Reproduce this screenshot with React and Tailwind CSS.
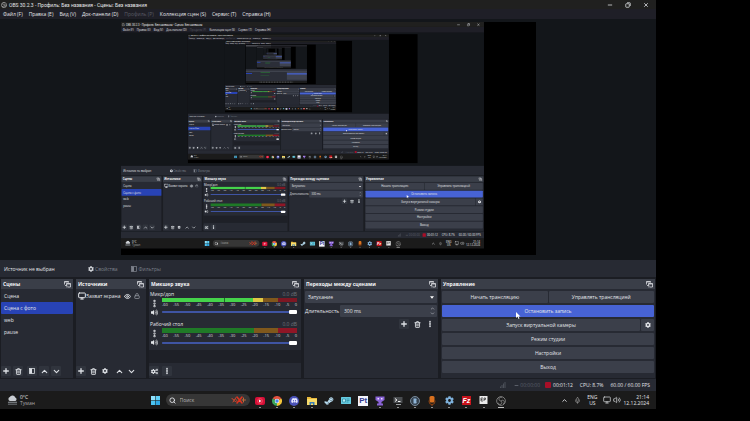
import { useId } from "react";
import clsx from "clsx";
import {
  ChevronDown,
  ChevronUp,
  EllipsisVertical,
  Eye,
  Lock,
  Mic,
  Minus,
  Monitor,
  Plus,
  Search,
  Trash2,
  Volume2,
  X,
} from "lucide-react";
import { FaCog, FaCogs, FaDiscord, FaSteamSymbol, FaVolumeUp } from "react-icons/fa";

// the preview shows the desktop itself, this many levels deep
const MAX_DEPTH = 3;

const MENU = [
  { label: "Файл (F)" },
  { label: "Правка (E)" },
  { label: "Вид (V)" },
  { label: "Док-панели (D)" },
  { label: "Профиль (P)", dim: true },
  { label: "Коллекция сцен (S)" },
  { label: "Сервис (T)" },
  { label: "Справка (H)" },
];

const SCENES = ["Сцена", "Сцена с фото", "web", "pause"];

const CHANNELS = [
  { name: "Микр/доп", live: true },
  { name: "Рабочий стол", live: false },
];

const TICKS = [-60, -55, -50, -45, -40, -35, -30, -25, -20, -15, -10, -5, 0];

// ---------- icons ----------

function ObsIcon({ className }) {
  return (
    <svg viewBox="0 0 24 24" className={className} fill="none" stroke="currentColor" strokeWidth="2">
      <circle cx="12" cy="12" r="10.5" />
      <path d="M12 12a4.5 4.5 0 1 1 3-7.500M12 12a4.500 4.500 0 1 1-7 4M12 12a4.500 4.500 0 1 1 5 7" />
    </svg>
  );
}

function PopOutIcon() {
  return (
    <svg viewBox="0 0 14 14" className="size-[7px]" fill="none" stroke="#e4e6ea" strokeWidth="1.5">
      <path d="M1 7V1h8v2M1 2h8" />
      <path d="M5 5h8v7H8M5 5v3M5 6h8" />
      <path d="M2 9h4v4" />
    </svg>
  );
}

function FilterIcon() {
  return (
    <svg viewBox="0 0 12 12" className="size-[6px]">
      <rect x="1" y="1" width="10" height="10" fill="none" stroke="currentColor" strokeWidth="1.500" />
      <rect x="1" y="1" width="5" height="10" fill="currentColor" />
    </svg>
  );
}

function WeatherIcon() {
  return (
    <svg viewBox="0 0 24 22" className="h-[10px] w-[11px]" fill="#c9cdd2">
      <path d="M6 13a4.500 4.500 0 0 1 0-8.500 6.500 6.500 0 0 1 12 1A4 4 0 0 1 18.500 13z" />
      <path d="M2 15h20v2H2zM2 19h20v2H2z" fill="#8f959b" />
    </svg>
  );
}

function WindowsIcon() {
  return (
    <svg viewBox="0 0 18 18" className="size-[9px]">
      <path d="M0 0h8.500v8.500H0z" fill="#8fe0fb" />
      <path d="M9.500 0H18v8.500H9.500z" fill="#5fd0f7" />
      <path d="M0 9.500h8.500V18H0z" fill="#4cc4f2" />
      <path d="M9.500 9.500H18V18H9.500z" fill="#2fa9e6" />
    </svg>
  );
}

function SearchArt() {
  return (
    <svg viewBox="0 0 32 16" className="h-[8px] w-[16px]" fill="none" strokeWidth="2" strokeLinecap="round">
      <path d="M2 5c4 0 3 6 7 6s3-4 0-5M4 12l6-9" stroke="#c8472f" />
      <path d="M12 2l5 6-5 6M22 2l-5 6 5 6" stroke="#e0331f" strokeWidth="3" />
      <path d="M25 4v8M22 8h7" stroke="#c06a3a" />
    </svg>
  );
}

function YoutubeMusicIcon() {
  return (
    <svg viewBox="0 0 20 20" className="size-[10px]">
      <rect y="2" width="20" height="16" rx="4" fill="#d80f38" />
      <circle cx="10" cy="10" r="5" fill="none" stroke="#f77" strokeWidth="1" />
      <path d="M8 7l5 3-5 3z" fill="#fff" />
    </svg>
  );
}

function ChromeIcon() {
  return (
    <svg viewBox="0 0 20 20" className="size-[10px]">
      <path d="M10 10L1.300 5A10 10 0 0 1 18.700 5z" fill="#e2513f" />
      <path d="M10 10L1.300 5A10 10 0 0 0 10 20z" fill="#3ba55a" />
      <path d="M10 10l8.700-5A10 10 0 0 1 10 20z" fill="#f4c63a" />
      <circle cx="10" cy="10" r="4.500" fill="#fff" />
      <circle cx="10" cy="10" r="3.500" fill="#4a86ee" />
    </svg>
  );
}

function DiscordIcon() {
  return (
    <span className="flex size-[10px] items-center justify-center rounded-full bg-[#4a52b8]">
      <FaDiscord className="size-[7px] text-[#e6e8ff]" />
    </span>
  );
}

function FolderIcon() {
  return (
    <svg viewBox="0 0 20 20" className="size-[10px]">
      <path d="M0 2h7l2 2h11v14H0z" fill="#e9b93b" />
      <path d="M0 6h20v12H0z" fill="#f8dc6b" />
      <path d="M5 18v-6h10v6h-3v-3H8v3z" fill="#3c7fb8" />
    </svg>
  );
}

function CardIcon() {
  return (
    <svg viewBox="0 0 20 18" className="h-[9px] w-[10px]">
      <rect y="2" width="20" height="14" rx="1" fill="#67cbe0" />
      <path d="M3 6h6v6H3zM11 6h6M11 9h6M11 12h4" stroke="#2c8ba1" strokeWidth="1.500" fill="#b9eef8" />
    </svg>
  );
}

function PtIcon() {
  return (
    <span className="flex size-[10px] items-center justify-center bg-[#f3f4fb] font-['Liberation_Sans',sans-serif] text-[8px] leading-[10px] font-bold text-[#34398f]">
      Pt
    </span>
  );
}

function TrophyIcon() {
  return (
    <svg viewBox="0 0 20 20" className="size-[10px]" fill="#8a63d6">
      <path d="M1 1h18v7l-6 4v3h3v4H4v-4h3v-3L1 8z" />
      <path d="M5 4h3v3H5zM12 4h3v3h-3z" fill="#e9e0ff" />
    </svg>
  );
}

function TerminalIcon() {
  return (
    <svg viewBox="0 0 20 20" className="size-[10px]">
      <path d="M1 2h18v12H1z" fill="#4a4d50" />
      <path d="M4 5l4 3-4 3M10 11h5" stroke="#f0f0f0" strokeWidth="2" fill="none" />
      <path d="M6 17h10" stroke="#9a9da1" strokeWidth="2" />
    </svg>
  );
}

function RingIcon() {
  return (
    <svg viewBox="0 0 20 20" className="size-[10px]">
      <circle cx="10" cy="10" r="9" fill="#35424e" stroke="#77899a" strokeWidth="2" />
      <path d="M7 5h5a3 3 0 0 1 0 5 3 3 0 0 1 0 5H7z" fill="#8fb4d6" />
    </svg>
  );
}

function OrangeMicIcon() {
  return (
    <svg viewBox="0 0 20 20" className="size-[10px]">
      <rect x="5" y="0" width="10" height="13" rx="3" fill="#d9711f" />
      <path d="M4 9v2a6 6 0 0 0 12 0V9M10 16v4" fill="none" stroke="#8d4212" strokeWidth="2" />
    </svg>
  );
}

function FileZillaIcon() {
  return (
    <span className="flex size-[9px] items-center justify-center bg-[#c8141d] font-['Liberation_Sans',sans-serif] text-[7px] leading-[9px] font-bold text-white italic">
      Fz
    </span>
  );
}

function EpicIcon() {
  return (
    <svg viewBox="0 0 18 18" className="size-[9px]">
      <path d="M1 0h16v16H1z" fill="#ececec" />
      <path d="M4 4h4M4 7h3M4 10h4M4 4v6M10 4v6M10 4h3v3h-3" stroke="#333" strokeWidth="1.500" fill="none" />
    </svg>
  );
}

const TASKS = [
  { name: "YouTube Music", icon: <YoutubeMusicIcon />, open: true },
  { name: "Chrome", icon: <ChromeIcon />, open: true },
  { name: "Discord", icon: <DiscordIcon />, open: true },
  { name: "Проводник", icon: <FolderIcon />, open: true },
  { name: "Steam", icon: <FaSteamSymbol className="size-[10px] text-[#b7dcf0]" /> },
  { name: "Карточки", icon: <CardIcon /> },
  { name: "Pt", icon: <PtIcon /> },
  { name: "Кубок", icon: <TrophyIcon />, open: true },
  { name: "Терминал", icon: <TerminalIcon />, open: true },
  { name: "Браузер", icon: <RingIcon />, open: true },
  { name: "Микрофон", icon: <OrangeMicIcon />, open: true },
  { name: "Параметры", icon: <FaCog className="size-[9px] text-[#7fb2dc]" />, open: true },
  { name: "FileZilla", icon: <FileZillaIcon />, open: true },
  { name: "Epic Games", icon: <EpicIcon />, open: true },
  { name: "OBS", icon: <ObsIcon className="size-[10px] text-[#8b8b8b]" />, open: true, active: true },
];

// ---------- small parts ----------

function IconButton({ label, filled, children }) {
  return (
    <button
      type="button"
      aria-label={label}
      className={clsx("flex size-[10px] items-center justify-center rounded-[1px] text-[#dcdfe4]", filled && "bg-[#30343d]")}
    >
      {children}
    </button>
  );
}

function Dock({ title, children }) {
  return (
    <section className="flex min-w-0 flex-col bg-[#272a33]">
      <header className="flex h-[10px] items-center justify-between bg-[#3a3e48] pr-[2px] pl-[2px]">
        <h2 className="font-bold whitespace-nowrap text-[#f4f5f7]">{title}</h2>
        <PopOutIcon />
      </header>
      {children}
    </section>
  );
}

function Channel({ name, live }) {
  const id = useId();
  return (
    <div>
      <div className="flex h-[8px] items-center justify-between">
        <label htmlFor={id}>{name}</label>
        <span className="text-[#70747d]">0.0 dB</span>
      </div>
      <div className="flex">
        <div className="flex w-[12px] shrink-0 flex-col">
          <button type="button" aria-label="Меню" className="flex h-[10px] w-[9px] items-center justify-center">
            <EllipsisVertical className="size-[9px]" strokeWidth={4} />
          </button>
          <button type="button" aria-label="Звук" className="flex h-[9px] w-[9px] items-center justify-center">
            <FaVolumeUp className="size-[7px]" />
          </button>
        </div>
        <div className="flex min-w-0 flex-1 flex-col">
          {live ? (
            <div className="flex h-[4px]">
              <span className="grow-[62] bg-[#45d34b]" />
              <span className="w-px bg-[#206b28]" />
              <span className="grow-[28] bg-[#45d34b]" />
              <span className="grow-[10] bg-[#e0c845]" />
              <span className="grow-[15] bg-[#80581c]" />
              <span className="grow-[19] bg-[#7d1723]" />
            </div>
          ) : (
            <div className="flex h-[5px]">
              <span className="grow-[91] bg-[#1f7a27]" />
              <span className="grow-[24] bg-[#80581c]" />
              <span className="grow-[19] bg-[#8f1626]" />
            </div>
          )}
          <div className="flex h-[6px] justify-between text-[4px] leading-[5px] text-[#d5d8dd]">
            {TICKS.map((t) => (
              <span key={t}>{t}</span>
            ))}
          </div>
          <input
            id={id}
            type="range"
            defaultValue={100}
            className="mt-[2px] h-[4px] w-full appearance-none rounded-full bg-[linear-gradient(#272a33_0_1px,#3f54a3_1px_3px,#272a33_3px)] [&::-webkit-slider-thumb]:h-[4px] [&::-webkit-slider-thumb]:w-[8px] [&::-webkit-slider-thumb]:appearance-none [&::-webkit-slider-thumb]:rounded-[1px] [&::-webkit-slider-thumb]:bg-white"
          />
        </div>
      </div>
    </div>
  );
}

function ControlButton({ active, className, children }) {
  return (
    <button
      type="button"
      className={clsx(
        "flex h-[12px] items-center justify-center rounded-[1px] whitespace-nowrap",
        active ? "bg-[#4763d5]" : "bg-[#3b3f4a]",
        className
      )}
    >
      {children}
    </button>
  );
}

// ---------- window sections ----------

function TitleBar() {
  return (
    <div className="flex h-[9px] items-center justify-between bg-[#20201f] pr-[7px] pl-px">
      <div className="flex items-center gap-[2px]">
        <ObsIcon className="size-[6px] text-[#c8c8c8]" />
        <h1 className="font-['Roboto',sans-serif] text-[5px] leading-[8px] whitespace-nowrap">
          OBS 30.2.3 - Профиль: Без названия - Сцены: Без названия
        </h1>
      </div>
      <div className="flex gap-[12px]">
        <button type="button" aria-label="Свернуть"><Minus className="size-[6px]" strokeWidth={3} /></button>
        <button type="button" aria-label="Развернуть">
          <svg viewBox="0 0 12 12" className="size-[6px]" fill="none" stroke="currentColor" strokeWidth="1.500">
            <rect x="1.500" y="3.500" width="7" height="7" rx="1" />
            <path d="M4 1.500h5.500a1 1 0 0 1 1 1V8" />
          </svg>
        </button>
        <button type="button" aria-label="Закрыть"><X className="size-[6px]" strokeWidth={3} /></button>
      </div>
    </div>
  );
}

function MenuBar() {
  return (
    <nav className="flex h-[10px] items-center gap-[6px] bg-[#1f1f27] pl-[3px]">
      {MENU.map((item) => (
        <button key={item.label} type="button" className={clsx("whitespace-nowrap", item.dim && "text-[#5a5c66]")}>
          {item.label}
        </button>
      ))}
    </nav>
  );
}

// Desktop reduced to its colour blocks, for the levels where nothing is readable
function MiniDesktop({ levels = 4 }) {
  return (
    <g>
      <path d="M0 0h656v409H0z" fill="#14171b" />
      <path d="M0 0h656v19H0z" fill="#24252b" />
      <path d="M4 4h132v3H4zM4 13h268v3H4z" fill="#6d7076" />
      <path d="M121 22h415v233H121z" fill="#000" />
      <path d="M0 260h656v131H0z" fill="#2b2e38" />
      <path d="M0 279h656v10H0z" fill="#474b56" />
      <path d="M2 302h68v11H2z" fill="#2843b5" />
      <path d="M442 292h212v82H442z" fill="#3f4350" />
      <path d="M442 306h212v12H442z" fill="#4763d5" />
      <path d="M161 298h101v5H161zM161 328h92v5h-92z" fill="#2a8a35" />
      <path d="M0 391h656v18H0z" fill="#1b1b1b" />
      <path d="M151 396h358" stroke="#8a8d92" strokeWidth="7" strokeDasharray="9 8" transform="translate(0 4)" />
      {levels > 1 && (
        <g transform="translate(121 22) scale(.5533)">
          <MiniDesktop levels={levels - 1} />
        </g>
      )}
    </g>
  );
}

function Preview({ depth }) {
  return (
    <main className="flex justify-center bg-[#13161a] pt-[3px] pb-[5px]">
      <div className="h-[233px] w-[415px] overflow-hidden bg-black">
        {depth < MAX_DEPTH ? (
          <div inert className="h-[421px] w-[750px] origin-top-left scale-[0.5533]">
            <Desktop depth={depth + 1} />
          </div>
        ) : (
          <svg viewBox="0 0 750 421" className="h-full w-full">
            <MiniDesktop />
          </svg>
        )}
      </div>
    </main>
  );
}

function SourceBar() {
  return (
    <div className="flex h-[17px] items-center bg-[#272a33] pl-[4px]">
      <span className="w-[84px]">Источник не выбран</span>
      <button type="button" className="flex items-center gap-px text-[#7c808a]">
        <FaCog className="size-[6px] text-[#d0d3d8]" />
        Свойства
      </button>
      <button type="button" className="ml-[13px] flex items-center gap-[2px] text-[#7c808a]">
        <FilterIcon />
        Фильтры
      </button>
    </div>
  );
}

function ScenesDock() {
  return (
    <Dock title="Сцены">
      <ul className="flex-1 pt-px">
        {SCENES.map((scene, i) => (
          <li key={scene}>
            <button
              type="button"
              className={clsx("block h-[12px] w-full rounded-[1px] pl-[3px] text-left", i === 1 && "bg-[#2843b5]")}
            >
              {scene}
            </button>
          </li>
        ))}
      </ul>
      <div className="flex gap-[2px] pb-[2px]">
        <IconButton label="Добавить" filled><Plus className="size-[8px]" strokeWidth={4} /></IconButton>
        <IconButton label="Удалить" filled><Trash2 className="size-[7px]" strokeWidth={3} /></IconButton>
        <span />
        <IconButton label="Фильтры" filled><FilterIcon /></IconButton>
        <IconButton label="Вверх" filled><ChevronUp className="size-[9px]" strokeWidth={3} /></IconButton>
        <IconButton label="Вниз" filled><ChevronDown className="size-[9px]" strokeWidth={3} /></IconButton>
      </div>
    </Dock>
  );
}

function SourcesDock() {
  return (
    <Dock title="Источники">
      <div className="flex-1 pt-px pr-[4px] pl-[2px]">
        <div className="flex h-[12px] items-center">
          <Monitor className="size-[8px] shrink-0" strokeWidth={3} />
          <span className="flex-1 whitespace-nowrap">Захват экрана</span>
          <IconButton label="Видимость"><Eye className="size-[7px]" strokeWidth={3} /></IconButton>
          <IconButton label="Блокировка"><Lock className="size-[6px] text-[#92969f]" strokeWidth={3} /></IconButton>
        </div>
      </div>
      <div className="flex gap-[2px] pb-[2px]">
        <IconButton label="Добавить" filled><Plus className="size-[8px]" strokeWidth={4} /></IconButton>
        <IconButton label="Удалить"><Trash2 className="size-[7px]" strokeWidth={3} /></IconButton>
        <IconButton label="Свойства"><FaCog className="size-[6px]" /></IconButton>
        <span />
        <IconButton label="Вверх"><ChevronUp className="size-[9px]" strokeWidth={3} /></IconButton>
        <IconButton label="Вниз"><ChevronDown className="size-[9px]" strokeWidth={3} /></IconButton>
      </div>
    </Dock>
  );
}

function MixerDock() {
  return (
    <Dock title="Микшер звука">
      <div className="flex flex-1 flex-col gap-[3px] pt-px pr-[4px] pl-px">
        {CHANNELS.map((c) => (
          <Channel key={c.name} {...c} />
        ))}
        <div className="-mr-[4px] -ml-px flex-1 bg-[#1e2027]" />
      </div>
      <div className="flex gap-[3px] pt-[3px] pb-[2px]">
        <IconButton label="Расширенные свойства" filled><FaCogs className="size-[7px]" /></IconButton>
        <IconButton label="Меню" filled><EllipsisVertical className="size-[8px]" strokeWidth={4} /></IconButton>
      </div>
    </Dock>
  );
}

function TransitionsDock() {
  const id = useId();
  return (
    <Dock title="Переходы между сценами">
      <div className="flex flex-col gap-[2px] px-px pt-[2px]">
        <div className="relative">
          <select
            aria-label="Переход"
            className="block h-[12px] w-full appearance-none rounded-[1px] bg-[#3b3f4a] pl-[3px]"
          >
            <option>Затухание</option>
          </select>
          <svg viewBox="0 0 8 5" className="pointer-events-none absolute top-[5px] right-[3px] h-[3px] w-[4px]" fill="#fff">
            <path d="M0 0h8L4 5z" />
          </svg>
        </div>
        <div className="flex h-[12px] items-center gap-px">
          <label htmlFor={id} className="w-[34px] whitespace-nowrap">Длительность</label>
          <div className="flex h-full min-w-0 flex-1 items-center rounded-[1px] bg-[#3b3f4a] pr-[2px] pl-[4px]">
            <input id={id} type="text" defaultValue="300 ms" className="min-w-0 flex-1 bg-transparent" />
            <span className="flex flex-col text-[#b9bcc4]">
              <button type="button" aria-label="Больше"><ChevronUp className="size-[5px]" strokeWidth={3} /></button>
              <button type="button" aria-label="Меньше"><ChevronDown className="size-[5px]" strokeWidth={3} /></button>
            </span>
          </div>
        </div>
        <div className="flex justify-end gap-[3px] pr-[2px]">
          <IconButton label="Добавить" filled><Plus className="size-[8px]" strokeWidth={4} /></IconButton>
          <IconButton label="Удалить"><Trash2 className="size-[7px]" strokeWidth={3} /></IconButton>
          <IconButton label="Меню"><EllipsisVertical className="size-[8px]" strokeWidth={4} /></IconButton>
        </div>
      </div>
    </Dock>
  );
}

function ControlsDock() {
  return (
    <Dock title="Управление">
      <div className="flex flex-col gap-[2px] px-px pt-[2px]">
        <div className="flex gap-px">
          <ControlButton className="flex-1">Начать трансляцию</ControlButton>
          <ControlButton className="flex-1">Управлять трансляцией</ControlButton>
        </div>
        <div className="relative flex">
          <ControlButton active className="flex-1">Остановить запись</ControlButton>
          <svg viewBox="0 0 10 14" className="absolute top-[7px] left-[35%] h-[7px] w-[5px]" fill="#fff">
            <path d="M0 0v12l3-3 2 5 2-1-2-4h4z" />
          </svg>
        </div>
        <div className="flex gap-px">
          <ControlButton className="flex-1">Запуск виртуальной камеры</ControlButton>
          <ControlButton className="w-[13px]"><FaCog aria-label="Настройка камеры" className="size-[6px]" /></ControlButton>
        </div>
        <ControlButton>Режим студии</ControlButton>
        <ControlButton>Настройки</ControlButton>
        <ControlButton>Выход</ControlButton>
      </div>
    </Dock>
  );
}

function StatusBar() {
  return (
    <footer className="flex h-[12px] items-center justify-end bg-[#272a33] pr-[6px] whitespace-nowrap">
      <svg viewBox="0 0 12 12" className="mr-[8px] size-[6px]" fill="#4c505a">
        <path d="M0 9h2v3H0zM3 6h2v6H3zM6 3h2v9H6zM9 0h2v12H9z" />
      </svg>
      <Minus className="mr-px size-[5px] text-[#7a7e88]" strokeWidth={3} />
      <span className="text-[#5b5f69]">00:00:00</span>
      <span className="mr-[2px] ml-[5px] size-[6px] rounded-[1px] bg-[#a80f28]" />
      <span>00:01:12</span>
      <span className="ml-[7px]">CPU: 8.7%</span>
      <span className="ml-[7px]">60.00 / 60.00 FPS</span>
    </footer>
  );
}

function Taskbar() {
  return (
    <div className="flex h-[18px] items-center bg-[#1b1b1b] pr-[7px] pl-[7px] leading-[6px]">
      <div className="flex flex-1 items-center gap-[2px]">
        <WeatherIcon />
        <div>
          <p>0°C</p>
          <p className="text-[#a9a9a9]">Туман</p>
        </div>
      </div>
      <div className="flex items-center pl-[4px]">
        <button type="button" aria-label="Пуск"><WindowsIcon /></button>
        <label className="mr-[2px] ml-[6px] flex h-[12px] w-[84px] items-center gap-[4px] rounded-full bg-[#363636] px-[3px]">
          <Search className="size-[7px] shrink-0" strokeWidth={3} />
          <input type="text" placeholder="Поиск" aria-label="Поиск" className="min-w-0 flex-1 placeholder:text-[#b5b5b5]" />
          <SearchArt />
        </label>
        <div className="grid w-[258px] grid-cols-15">
          {TASKS.map((t) => (
            <button key={t.name} type="button" aria-label={t.name} className="flex h-[16px] flex-col items-center justify-end gap-px">
              <span className="flex h-[11px] items-center">{t.icon}</span>
              <span className={clsx("h-px", t.active ? "w-[6px] bg-[#c4c4c4]" : "w-[2px]", t.open && !t.active && "bg-[#909090]")} />
            </button>
          ))}
        </div>
      </div>
      <div className="flex flex-1 items-center justify-end">
        <ChevronUp className="mr-[6px] size-[7px]" strokeWidth={3} />
        <Mic className="mr-[6px] size-[7px] text-[#a5a5a5]" strokeWidth={2} />
        <div className="mr-[5px] text-center">
          <p>ENG</p>
          <p>US</p>
        </div>
        <Monitor className="mr-[2px] size-[8px]" strokeWidth={2} />
        <Volume2 className="mr-[3px] size-[8px]" strokeWidth={2} />
        <div className="text-right text-[5px]">
          <p>21:14</p>
          <p>12.12.2024</p>
        </div>
      </div>
    </div>
  );
}

function Desktop({ depth = 0 }) {
  return (
    <div className="mr-[94px] bg-[#1b1d23] font-['Open_Sans','Noto_Sans',sans-serif] text-[5px] leading-[8px] text-[#e3e5e9]">
      <TitleBar />
      <MenuBar />
      <Preview depth={depth} />
      <SourceBar />
      <div className="grid h-[102px] grid-cols-[72fr_70fr_152fr_134fr_214fr] gap-[3px] px-px pt-[2px] pb-px">
        <ScenesDock />
        <SourcesDock />
        <MixerDock />
        <TransitionsDock />
        <ControlsDock />
      </div>
      <StatusBar />
      <Taskbar />
    </div>
  );
}

export default function App() {
  return (
    <div className="min-h-screen bg-black">
      <Desktop />
    </div>
  );
}
